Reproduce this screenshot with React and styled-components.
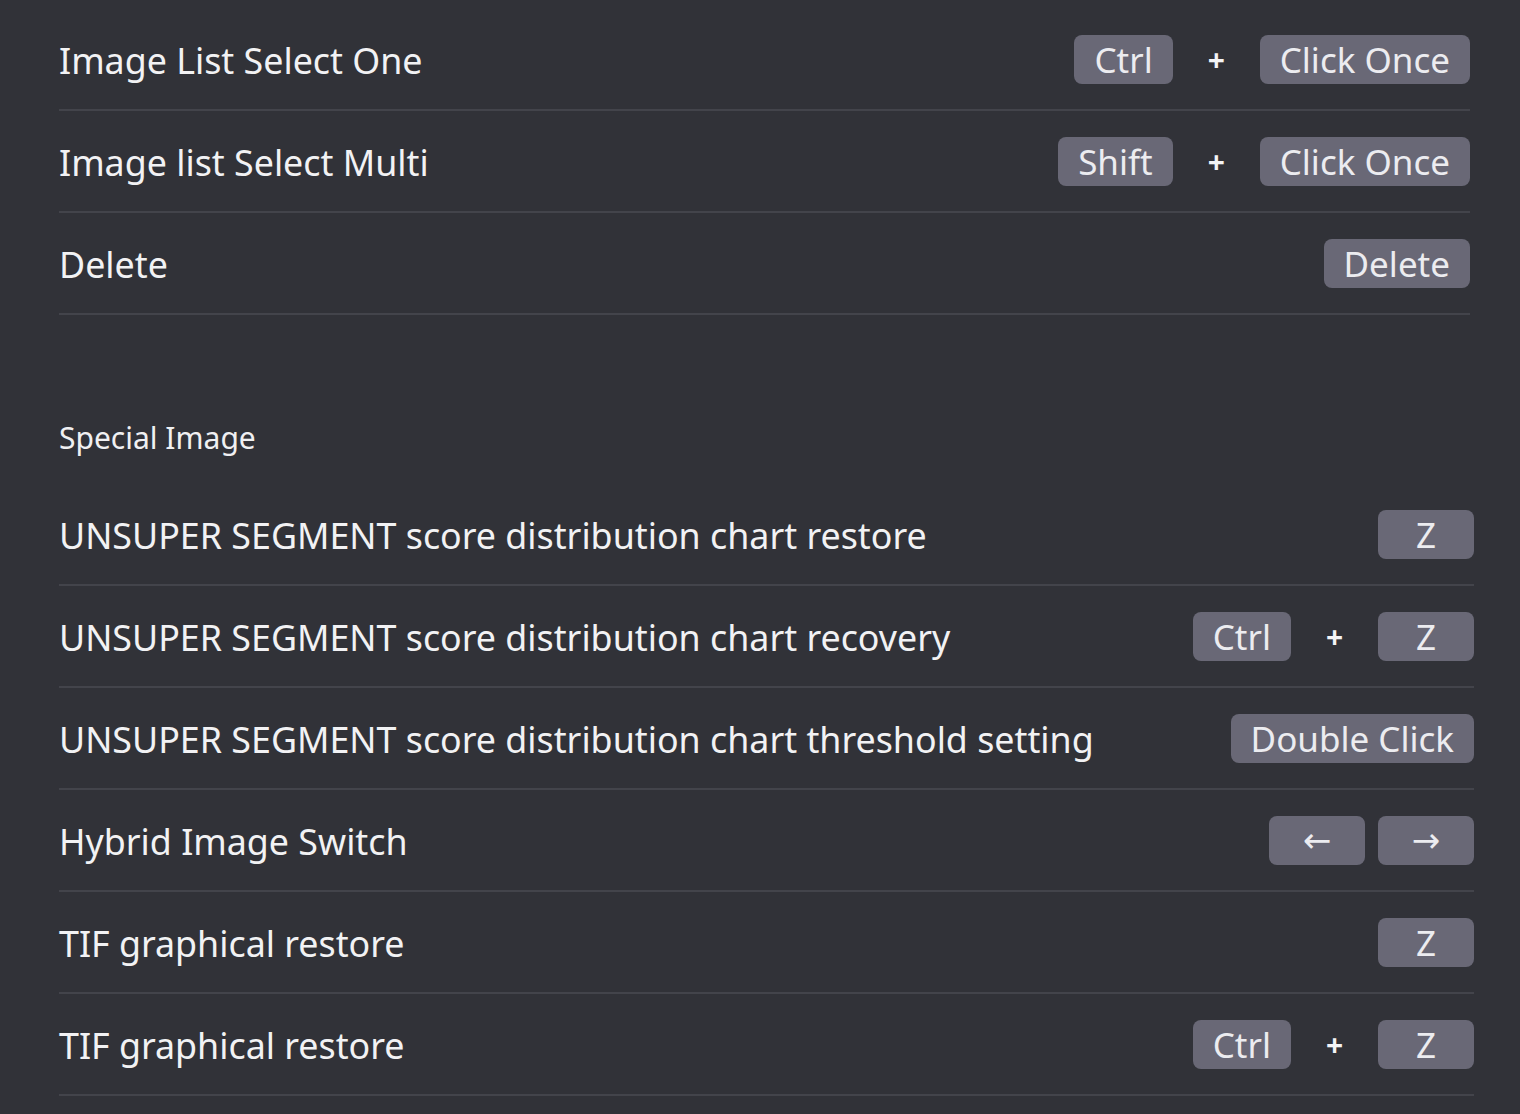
import React from "react";
import styled, { createGlobalStyle } from "styled-components";

const GlobalStyle = createGlobalStyle`
  html, body { margin: 0; padding: 0; background: #313238; }
  body { font-family: "Noto Sans", "Open Sans", "DejaVu Sans", sans-serif; color: #f2f2f4; }
`;

const Page = styled.div`
  padding: 9px 0 0 59px;
  width: 1520px;
  height: 1114px;
  box-sizing: border-box;
  overflow: hidden;
`;

const Section = styled.section`
  margin-right: ${(p) => p.$right}px;
  display: flex;
  flex-direction: column;
`;

const Row = styled.div`
  height: 100px;
  display: flex;
  align-items: center;
  justify-content: space-between;
  border-bottom: 2px solid #43444b;
`;

const Label = styled.span`
  font-size: 35.8px;
  line-height: 44px;
  padding-top: 2px;
  color: #f2f2f4;
  white-space: nowrap;
`;

const Header = styled.div`
  padding: 101px 0 24px;
  font-size: 30px;
  line-height: 44px;
  color: #f0f0f2;
`;

const Keys = styled.div`
  display: flex;
  align-items: center;
  gap: ${(p) => (p.$tight ? "13px" : "0")};
`;

const Key = styled.span`
  min-width: 96px;
  height: 49px;
  box-sizing: border-box;
  padding: 0 20px;
  border-radius: 8px;
  background: #696876;
  color: #ececf0;
  font-size: 35px;
  display: inline-flex;
  align-items: center;
  justify-content: center;
  white-space: nowrap;
`;

const Plus = styled.span`
  width: 87px;
  text-align: center;
  font-size: 30px;
  font-weight: 700;
  color: #f4f4f6;
`;

const Arrow = styled.span`
  font-family: "DejaVu Sans", sans-serif;
  font-size: 34px;
  line-height: 1;
`;

function Combo({ keys }) {
  return (
    <Keys>
      {keys.map((k, i) => (
        <React.Fragment key={i}>
          {i > 0 && <Plus>+</Plus>}
          <Key>{k}</Key>
        </React.Fragment>
      ))}
    </Keys>
  );
}

const first = [
  ["Image List Select One", ["Ctrl", "Click Once"]],
  ["Image list Select Multi", ["Shift", "Click Once"]],
  ["Delete", ["Delete"]],
];

const second = [
  ["UNSUPER SEGMENT score distribution chart restore", ["Z"]],
  ["UNSUPER SEGMENT score distribution chart recovery", ["Ctrl", "Z"]],
  ["UNSUPER SEGMENT score distribution chart threshold setting", ["Double Click"]],
  ["Hybrid Image Switch", null],
  ["TIF graphical restore", ["Z"]],
  ["TIF graphical restore", ["Ctrl", "Z"]],
];

export default function App() {
  return (
    <>
      <GlobalStyle />
      <Page>
        <Section $right={50}>
          {first.map(([label, keys], i) => (
            <Row key={i}>
              <Label>{label}</Label>
              <Combo keys={keys} />
            </Row>
          ))}
        </Section>
        <Header>Special Image</Header>
        <Section $right={46}>
          {second.map(([label, keys], i) => (
            <Row key={i}>
              <Label>{label}</Label>
              {keys ? (
                <Combo keys={keys} />
              ) : (
                <Keys $tight>
                  <Key><Arrow>←</Arrow></Key>
                  <Key><Arrow>→</Arrow></Key>
                </Keys>
              )}
            </Row>
          ))}
        </Section>
      </Page>
    </>
  );
}
